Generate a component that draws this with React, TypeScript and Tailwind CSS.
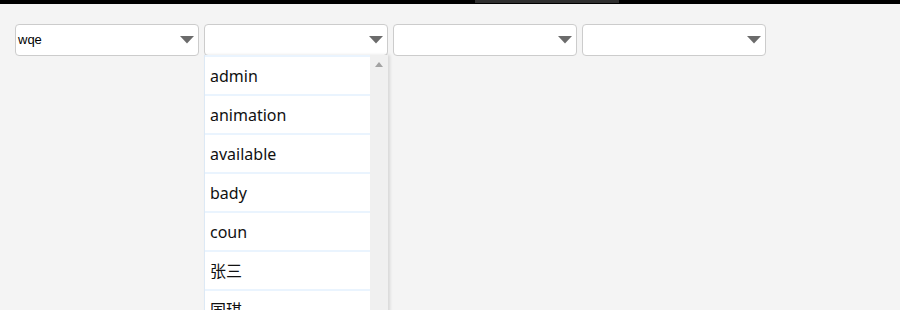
const options = ["admin", "animation", "available", "bady", "coun", "张三", "国琪", "李四"];

function Arrow() {
  return (
    <svg width="14" height="8" viewBox="0 0 14 8" className="shrink-0">
      <polygon points="0,0 14,0 7,7.5" fill="#6b6b6b" />
    </svg>
  );
}

function SelectBox({ value, open }: { value?: string; open?: boolean }) {
  return (
    <div className="relative">
      <div className="w-[184px] h-[32px] bg-white border border-[#cccccc] rounded-[4px] flex items-center justify-between pl-[2px] pr-[4px]">
        <span className="text-[13px] text-black" style={{ fontFamily: '"Liberation Sans", Arial, sans-serif' }}>
          {value}
        </span>
        <Arrow />
      </div>
      {open && (
        <div className="absolute left-0 top-[31px] w-[184px] h-[300px] flex bg-white border-l border-[#dde9f5] shadow-[2px_0_3px_rgba(0,0,0,0.12)]">
          <div className="w-[165px] flex flex-col border-t-2 border-[#eaf4fe]">
            {options.map((o) => (
              <div
                key={o}
                className="h-[39px] shrink-0 flex items-center pl-[5px] border-b-2 border-[#eaf4fe] text-[16px] text-[#111]"
                style={{ fontFamily: '"Noto Sans", "Noto Sans CJK SC", sans-serif' }}
              >
                {o}
              </div>
            ))}
          </div>
          <div className="w-[18px] bg-[#f0f0f0] flex justify-center pt-[7px]">
            <svg width="8" height="5" viewBox="0 0 8 5">
              <polygon points="4,0 8,5 0,5" fill="#a3a3a3" />
            </svg>
          </div>
        </div>
      )}
    </div>
  );
}

export default function App() {
  return (
    <div className="w-[900px] h-[310px] overflow-hidden bg-[#f4f4f4]">
      <div className="h-[4px] bg-black flex">
        <div className="ml-[475px] w-[144px] h-[3px] bg-[#2f2f2f]" />
      </div>
      <div className="flex gap-[5px] pl-[15px] pt-[20px]">
        <SelectBox value="wqe" />
        <SelectBox open />
        <SelectBox />
        <SelectBox />
      </div>
    </div>
  );
}
